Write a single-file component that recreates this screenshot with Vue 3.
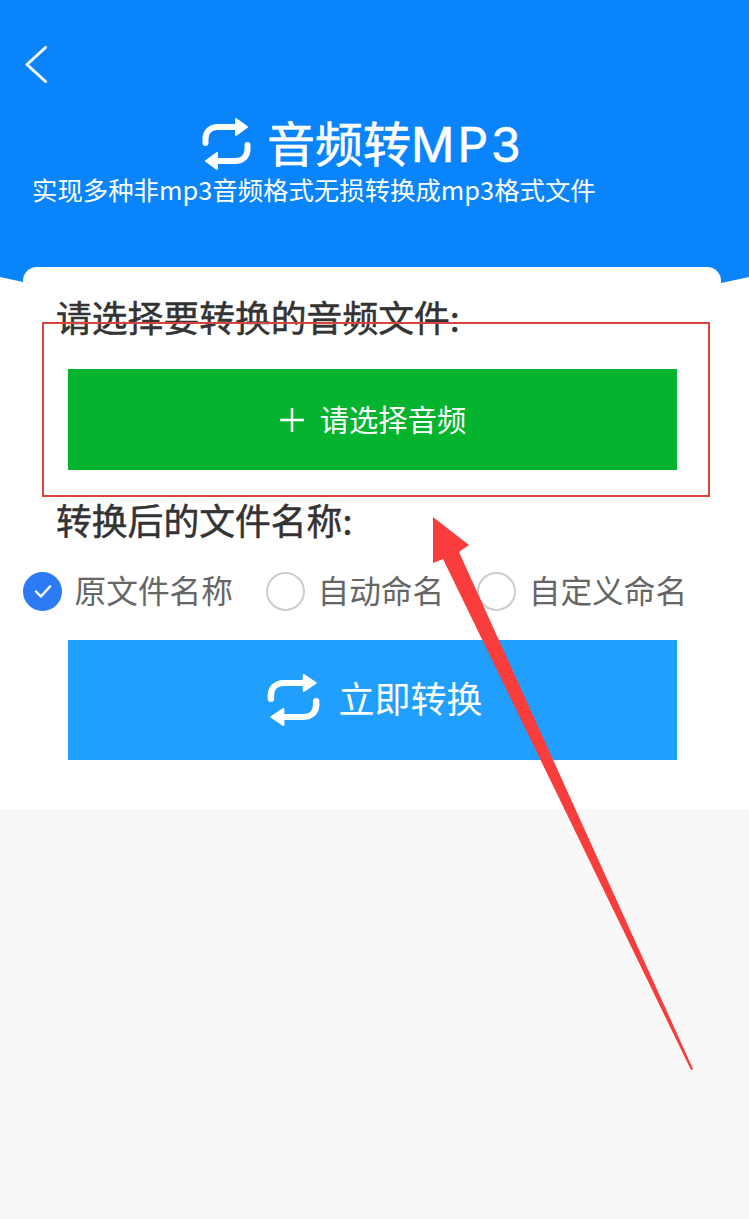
<script setup>
const options = [
  { label: '原文件名称', checked: true },
  { label: '自动命名', checked: false },
  { label: '自定义命名', checked: false },
]
</script>

<template>
  <div class="page">
    <main class="main">
      <header class="header">
        <svg class="back" width="24" height="37" viewBox="0 0 24 37" fill="none" stroke="#fff" stroke-width="3" stroke-linecap="round" stroke-linejoin="round">
          <path d="M21.500 1.500 3 18.500 21.500 35.500" />
        </svg>
        <div class="title-row">
          <svg class="swap" viewBox="0 0 52 58" preserveAspectRatio="none">
            <path d="M36 12H18C10 12 5.500 17 5.500 24V28M17 46H35C43 46 47.500 41 47.500 34V30" fill="none" stroke="#fff" stroke-width="6" stroke-linecap="round" />
            <path d="M36 4 47 12 36 20ZM17 38 6 46 17 54Z" fill="#fff" stroke="#fff" stroke-width="2" stroke-linejoin="round" />
          </svg>
          <h1 class="title">音频转<span class="latin">MP3</span></h1>
        </div>
        <p class="subtitle">实现多种非mp3音频格式无损转换成mp3格式文件</p>
      </header>

      <section class="card">
        <h2 class="label first">请选择要转换的音频文件:</h2>
        <button class="btn pick">
          <svg class="plus" width="26" height="26" viewBox="0 0 26 26" stroke="#fff" stroke-width="2.500">
            <path d="M13 1V25M1 13H25" />
          </svg>
          <span class="btn-text">请选择音频</span>
        </button>
        <h2 class="label second">转换后的文件名称:</h2>
        <div class="options">
          <div v-for="o in options" :key="o.label" class="option">
            <span class="radio" :class="{ on: o.checked }">
              <svg v-if="o.checked" width="18" height="15" viewBox="0 0 18 15" fill="none" stroke="#fff" stroke-width="2.500" stroke-linecap="round" stroke-linejoin="round">
                <path d="M2 7.500 6.800 12.500 16 2.500" />
              </svg>
            </span>
            <span class="option-text">{{ o.label }}</span>
          </div>
        </div>
        <button class="btn convert">
          <svg class="swap small" viewBox="0 0 52 58" preserveAspectRatio="none">
            <path d="M36 12H18C10 12 5.500 17 5.500 24V28M17 46H35C43 46 47.500 41 47.500 34V30" fill="none" stroke="#fff" stroke-width="6" stroke-linecap="round" />
            <path d="M36 4 47 12 36 20ZM17 38 6 46 17 54Z" fill="#fff" stroke="#fff" stroke-width="2" stroke-linejoin="round" />
          </svg>
          <span class="btn-text big">立即转换</span>
        </button>
      </section>
    </main>

    <svg class="annotation" width="749" height="1219" viewBox="0 0 749 1219">
      <rect x="43" y="323" width="666" height="173" fill="none" stroke="#d9443f" stroke-width="2" />
      <path d="M433 517 469 545 459 552 693 1069 691 1070 443 559 433 563Z" fill="#f93d3d" />
    </svg>
  </div>
</template>

<style>
html, body { margin: 0; padding: 0; background: #f8f8f8; }
</style>

<style scoped>
.page {
  position: relative;
  width: 749px;
  height: 1219px;
  overflow: hidden;
  background: #f8f8f8;
  font-family: "Noto Sans CJK SC", "Noto Sans", sans-serif;
}
.main {
  background: #fff;
  padding-bottom: 49px;
}
.header {
  box-sizing: border-box;
  height: 300px;
  padding-top: 46px;
  background: #0a84fb;
  color: #fff;
  clip-path: polygon(0 0, 100% 0, 100% 277px, 96.300% 283px, 50% 300px, 3.700% 283px, 0 277px);
}
.back {
  display: block;
  margin-left: 24px;
}
.title-row {
  display: flex;
  align-items: flex-start;
  gap: 15px;
  margin-top: 32px;
  padding-left: 200px;
  height: 56px;
}
.swap {
  width: 52px;
  height: 58px;
  flex: none;
}
.title {
  margin: -2px 0 0;
  font-size: 48px;
  font-weight: 400;
  line-height: 56px;
  white-space: nowrap;
  -webkit-text-stroke: 0.600px #fff;
}
.latin {
  font-family: Inter, "Noto Sans", sans-serif;
  letter-spacing: 3px;
}
.subtitle {
  margin: 0;
  padding-left: 32px;
  font-size: 25.400px;
  line-height: 36px;
  white-space: nowrap;
}
.card {
  position: relative;
  margin: -33px 28px 0 23px;
  padding-top: 26px;
  background: #fff;
  border-radius: 14px 14px 0 0;
}
.label {
  margin: 0 0 0 33px;
  padding-bottom: 4px;
  font-size: 35.800px;
  font-weight: 400;
  line-height: 46px;
  color: #333;
  white-space: nowrap;
  -webkit-text-stroke: 0.500px #333;
}
.second {
  margin-top: 26px;
}
.btn {
  display: flex;
  align-items: center;
  justify-content: center;
  width: 609px;
  margin-left: 45px;
  padding: 0;
  border: 0;
  color: #fff;
  font-family: inherit;
}
.btn-text {
  padding-bottom: 4px;
}
.btn-text.big {
  padding-bottom: 6px;
}
.pick {
  height: 101px;
  margin-top: 26px;
  gap: 15px;
  background: #04b42e;
  font-size: 29.300px;
}
.plus {
  flex: none;
}
.options {
  display: flex;
  gap: 33px;
  margin-top: 25px;
}
.option {
  display: flex;
  align-items: center;
  gap: 12.500px;
}
.radio {
  box-sizing: border-box;
  display: flex;
  align-items: center;
  justify-content: center;
  width: 39px;
  height: 39px;
  border: 2px solid #ccc;
  border-radius: 50%;
  flex: none;
}
.radio.on {
  background: #2d7bf4;
  border-color: #2d7bf4;
}
.option-text {
  padding-bottom: 4px;
  font-size: 31.700px;
  line-height: 36px;
  color: #666;
  white-space: nowrap;
}
.convert {
  box-sizing: border-box;
  height: 120px;
  margin-top: 29px;
  padding-left: 3px;
  gap: 17px;
  background: #209fff;
  font-size: 36px;
}
.swap.small {
  width: 56px;
  height: 58px;
}
.annotation {
  position: absolute;
  top: 0;
  left: 0;
  pointer-events: none;
}
</style>
